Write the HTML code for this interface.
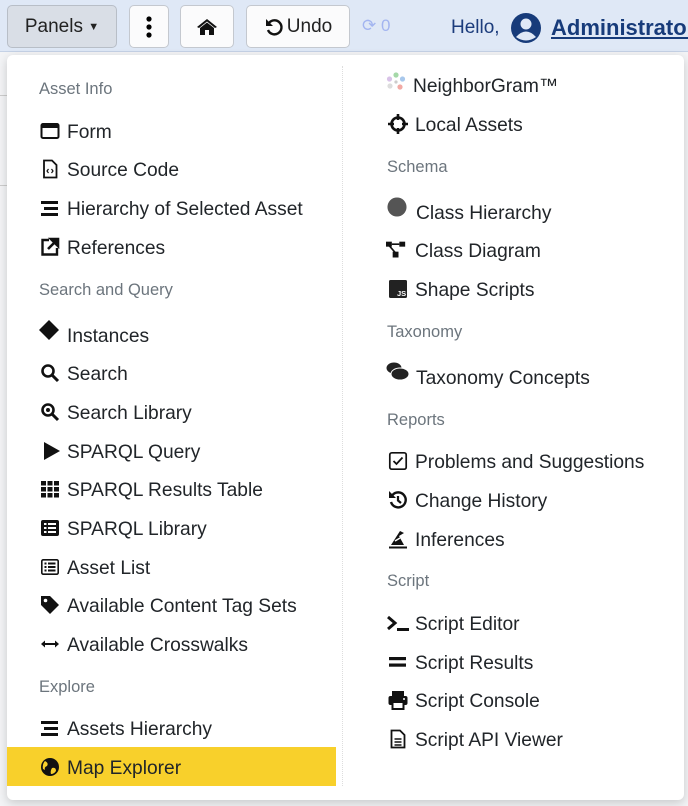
<!DOCTYPE html>
<html><head><meta charset="utf-8"><style>
*{box-sizing:border-box;margin:0;padding:0}
body{width:688px;height:806px;overflow:hidden;background:#f3f4f6;font-family:"Liberation Sans",sans-serif;position:relative;color:#212529}
.hdr{position:absolute;left:0;top:0;width:688px;height:52px;background:#dfe8f6;border-bottom:1px solid #c5d2e6}
.btn{position:absolute;top:5px;height:43px;border:1px solid #c4c8cf;border-radius:5px;background:#fbfbfc;font-size:19px;display:flex;align-items:center;justify-content:center;color:#222}
.menu{position:absolute;left:7px;top:55px;width:677px;height:745px;background:#fff;border-radius:6px;box-shadow:0 3px 10px rgba(0,0,0,.18)}
.div{position:absolute;left:342px;top:66px;height:720px;border-left:1px dotted #ddd}
.it{position:absolute;height:26px;line-height:26px;font-size:19.2px;color:#212529;white-space:nowrap;margin-top:2px}
.hd{position:absolute;height:22px;line-height:22px;font-size:16.5px;color:#6c757d}
.ic{position:absolute;width:20px;height:20px}
.sel{position:absolute;left:7px;top:747px;width:329px;height:39px;background:#f8d02b}
</style></head><body>
<div style="position:absolute;left:0;top:95px;width:7px;height:1px;background:#ccc"></div>
<div style="position:absolute;left:0;top:185px;width:7px;height:1px;background:#ccc"></div>
<div class="hdr"></div>
<div class="btn" style="left:7px;width:110px;background:#d9dee6;border-color:#b8bec7">Panels&nbsp;<span style="font-size:11px">▼</span></div>
<div class="btn" style="left:129px;width:40px"><svg width="6" height="22"><circle cx="3" cy="3" r="2.6"/><circle cx="3" cy="11" r="2.6"/><circle cx="3" cy="19" r="2.6"/></svg></div>
<div class="btn" style="left:180px;width:54px"><svg width="22" height="18" viewBox="0 0 22 18"><path d="M11 1 L1 9 L3 10 L11 3.5 L19 10 L21 9 Z M4 10 L4 17 L9 17 L9 12 L13 12 L13 17 L18 17 L18 10 L11 4.5 Z" fill="#111"/></svg></div>
<div class="btn" style="left:246px;width:104px"><svg width="20" height="20" viewBox="0 0 20 20" style="margin-right:3px"><path d="M5 6 A7 7 0 1 1 4 13" fill="none" stroke="#111" stroke-width="2.4"/><path d="M2 2 L2 9 L9 9 Z" fill="#111"/></svg>Undo</div>
<div style="position:absolute;left:362px;top:16px;font-size:17px;color:#a3b5f0">⟳ 0</div>
<div style="position:absolute;left:451px;top:17px;font-size:19px;color:#1c3c7c">Hello,</div>
<svg style="position:absolute;left:510px;top:12px" width="32" height="32" viewBox="0 0 32 32"><circle cx="16" cy="16" r="15" fill="#173b7a"/><circle cx="16" cy="12" r="5.5" fill="#dfe8f6"/><path d="M6 25 Q16 14 26 25 Q16 32 6 25Z" fill="#dfe8f6"/></svg>
<div style="position:absolute;left:551px;top:15px;font-size:22px;font-weight:bold;color:#173b7a;text-decoration:underline;white-space:nowrap">Administrator</div>
<div class="menu"></div>
<div class="div"></div>
<div class="sel"></div>

<div class="hd" style="left:39px;top:78px">Asset Info</div>
<svg class="ic" style="left:40px;top:121px" viewBox="0 0 20 20"><rect x="1.5" y="3" width="17" height="14" rx="1.5" fill="none" stroke="#111" stroke-width="2"/><rect x="1.5" y="3" width="17" height="4" fill="#111"/></svg><div class="it" style="left:67px;top:118px">Form</div>
<svg class="ic" style="left:40px;top:159px" viewBox="0 0 20 20"><path d="M4 1.5 H12 L16.5 6 V18.5 H4 Z" fill="none" stroke="#111" stroke-width="1.8"/><path d="M8.5 10 L7 12 L8.5 14 M11.5 10 L13 12 L11.5 14" fill="none" stroke="#111" stroke-width="1.2"/></svg><div class="it" style="left:67px;top:156px">Source Code</div>
<svg class="ic" style="left:40px;top:198px" viewBox="0 0 20 20"><rect x="1" y="3" width="17" height="3" fill="#111"/><rect x="4" y="9" width="14" height="3" fill="#111"/><rect x="1" y="15" width="17" height="3" fill="#111"/></svg><div class="it" style="left:67px;top:195px">Hierarchy of Selected Asset</div>
<svg class="ic" style="left:40px;top:237px" viewBox="0 0 20 20"><path d="M9 3 H2.5 V17.5 H17 V11" fill="none" stroke="#111" stroke-width="2.4"/><path d="M11 2 H18 V9 Z M16 4 L8 12" stroke="#111" stroke-width="2.6" fill="#111"/></svg><div class="it" style="left:67px;top:234px">References</div>
<div class="hd" style="left:39px;top:279px">Search and Query</div>
<svg class="ic" style="left:39px;top:320px" viewBox="0 0 22 22"><path d="M11 0 L22 11 L11 22 L0 11Z" fill="#111"/></svg><div class="it" style="left:67px;top:322px">Instances</div>
<svg class="ic" style="left:40px;top:363px" viewBox="0 0 20 20"><circle cx="8" cy="8" r="5.5" fill="none" stroke="#111" stroke-width="2.6"/><path d="M12 12 L18 18" stroke="#111" stroke-width="3"/></svg><div class="it" style="left:67px;top:360px">Search</div>
<svg class="ic" style="left:40px;top:402px" viewBox="0 0 20 20"><circle cx="8" cy="8" r="5.5" fill="none" stroke="#111" stroke-width="2.6"/><circle cx="8" cy="8" r="2" fill="#111"/><path d="M12 12 L18 18" stroke="#111" stroke-width="3"/></svg><div class="it" style="left:67px;top:399px">Search Library</div>
<svg class="ic" style="left:42px;top:441px" viewBox="0 0 20 20"><path d="M2 1 L18 10 L2 19Z" fill="#111"/></svg><div class="it" style="left:67px;top:438px">SPARQL Query</div>
<svg class="ic" style="left:40px;top:479px" viewBox="0 0 20 20"><g fill="#111"><rect x="1" y="2" width="5" height="4.5"/><rect x="7.5" y="2" width="5" height="4.5"/><rect x="14" y="2" width="5" height="4.5"/><rect x="1" y="8" width="5" height="4.5"/><rect x="7.5" y="8" width="5" height="4.5"/><rect x="14" y="8" width="5" height="4.5"/><rect x="1" y="14" width="5" height="4.5"/><rect x="7.5" y="14" width="5" height="4.5"/><rect x="14" y="14" width="5" height="4.5"/></g></svg><div class="it" style="left:67px;top:476px">SPARQL Results Table</div>
<svg class="ic" style="left:40px;top:518px" viewBox="0 0 20 20"><rect x="1" y="2" width="18" height="16" rx="2" fill="#111"/><g fill="#fff"><rect x="4" y="5" width="2.5" height="2"/><rect x="8" y="5" width="8" height="2"/><rect x="4" y="9" width="2.5" height="2"/><rect x="8" y="9" width="8" height="2"/><rect x="4" y="13" width="2.5" height="2"/><rect x="8" y="13" width="8" height="2"/></g></svg><div class="it" style="left:67px;top:515px">SPARQL Library</div>
<svg class="ic" style="left:40px;top:557px" viewBox="0 0 20 20"><rect x="1.8" y="2.8" width="16.4" height="14.4" rx="1.5" fill="none" stroke="#111" stroke-width="1.6"/><g fill="#111"><rect x="4.5" y="5.5" width="2" height="2"/><rect x="8" y="5.5" width="7.5" height="2"/><rect x="4.5" y="9" width="2" height="2"/><rect x="8" y="9" width="7.5" height="2"/><rect x="4.5" y="12.5" width="2" height="2"/><rect x="8" y="12.5" width="7.5" height="2"/></g></svg><div class="it" style="left:67px;top:554px">Asset List</div>
<svg class="ic" style="left:40px;top:595px" viewBox="0 0 20 20"><path d="M1 1 H10 L19 10 L10 19 L1 10Z" fill="#111"/><circle cx="5.5" cy="5.5" r="1.8" fill="#fff"/></svg><div class="it" style="left:67px;top:592px">Available Content Tag Sets</div>
<svg class="ic" style="left:40px;top:634px" viewBox="0 0 20 20"><path d="M4 10 H16" stroke="#111" stroke-width="2"/><path d="M1 10 L5 6.5 V13.5Z M19 10 L15 6.5 V13.5Z" fill="#111"/></svg><div class="it" style="left:67px;top:631px">Available Crosswalks</div>
<div class="hd" style="left:39px;top:676px">Explore</div>
<svg class="ic" style="left:40px;top:718px" viewBox="0 0 20 20"><rect x="1" y="3" width="17" height="3" fill="#111"/><rect x="4" y="9" width="14" height="3" fill="#111"/><rect x="1" y="15" width="17" height="3" fill="#111"/></svg><div class="it" style="left:67px;top:715px">Assets Hierarchy</div>
<svg class="ic" style="left:40px;top:757px" viewBox="0 0 20 20"><circle cx="10" cy="10" r="9" fill="#111"/><path d="M5 4 Q9 6 7 9 Q4 10 5 13 L3 12 Q2 7 5 4Z M12 11 Q16 10 16 14 Q14 17 11 17 Q10 14 12 11Z" fill="#f8d02b"/></svg><div class="it" style="left:67px;top:754px">Map Explorer</div>

<svg class="ic" style="left:386px;top:72px" viewBox="0 0 20 20"><circle cx="10" cy="3" r="2.6" fill="#a5d8a8"/><circle cx="3.5" cy="7" r="2.6" fill="#d9c3e8"/><circle cx="16.5" cy="7" r="2.6" fill="#a8c8ec"/><circle cx="4" cy="14" r="2.6" fill="#ddd"/><circle cx="14" cy="15" r="2.6" fill="#f2aaa5"/><circle cx="10" cy="10" r="1.6" fill="#ccc"/></svg><div class="it" style="left:413px;top:72px">NeighborGram™</div>
<svg class="ic" style="left:388px;top:114px" viewBox="0 0 20 20"><circle cx="10" cy="10" r="6.5" fill="none" stroke="#111" stroke-width="2.6"/><path d="M10 0 V6 M10 14 V20 M0 10 H6 M14 10 H20" stroke="#111" stroke-width="2.6"/></svg><div class="it" style="left:415px;top:111px">Local Assets</div>
<div class="hd" style="left:387px;top:156px">Schema</div>
<svg class="ic" style="left:387px;top:197px" viewBox="0 0 22 22"><circle cx="11" cy="11" r="10.5" fill="#555"/></svg><div class="it" style="left:416px;top:199px">Class Hierarchy</div>
<svg class="ic" style="left:386px;top:240px" viewBox="0 0 24 20"><g fill="#111"><rect x="0" y="0" width="7" height="6"/><rect x="16" y="0" width="7" height="6"/><rect x="8" y="12" width="7" height="7"/></g><path d="M7 3 H16 M4 5 L11 13" stroke="#111" stroke-width="2"/></svg><div class="it" style="left:415px;top:237px">Class Diagram</div>
<svg class="ic" style="left:388px;top:279px" viewBox="0 0 20 20"><rect x="1" y="1" width="18" height="18" rx="1.5" fill="#222"/><text x="9" y="17" font-size="7.5" font-weight="bold" fill="#fff" font-family="Liberation Sans">JS</text></svg><div class="it" style="left:415px;top:276px">Shape Scripts</div>
<div class="hd" style="left:387px;top:321px">Taxonomy</div>
<svg class="ic" style="left:386px;top:362px;width:24px" viewBox="0 0 24 20"><ellipse cx="8" cy="6" rx="7.5" ry="5.5" fill="#222"/><ellipse cx="14" cy="12" rx="9" ry="6" fill="#222" stroke="#fff" stroke-width="1"/></svg><div class="it" style="left:416px;top:364px">Taxonomy Concepts</div>
<div class="hd" style="left:387px;top:409px">Reports</div>
<svg class="ic" style="left:388px;top:451px" viewBox="0 0 20 20"><rect x="1.8" y="1.8" width="16.4" height="16.4" rx="2" fill="none" stroke="#111" stroke-width="1.7"/><path d="M5.5 10 L8.5 13 L14.5 6.5" fill="none" stroke="#111" stroke-width="1.8"/></svg><div class="it" style="left:415px;top:448px">Problems and Suggestions</div>
<svg class="ic" style="left:388px;top:490px" viewBox="0 0 20 20"><path d="M4.5 5 A7.5 7.5 0 1 1 3 12" fill="none" stroke="#111" stroke-width="2.4"/><path d="M1 1 V8 H8Z" fill="#111"/><path d="M10 6 V10.5 L13 13" fill="none" stroke="#111" stroke-width="2.2"/></svg><div class="it" style="left:415px;top:487px">Change History</div>
<svg class="ic" style="left:388px;top:529px" viewBox="0 0 20 20"><path d="M3 16 L12 2 L16 4 L11 7 L16 16Z" fill="#111"/><path d="M7 12 L12 9" stroke="#fff" stroke-width="1.5"/><rect x="1" y="17.5" width="18" height="2" fill="#111"/></svg><div class="it" style="left:415px;top:526px">Inferences</div>
<div class="hd" style="left:387px;top:570px">Script</div>
<svg class="ic" style="left:386px;top:613px;width:24px" viewBox="0 0 24 20"><path d="M2 4 L9 10 L2 16" fill="none" stroke="#111" stroke-width="3"/><rect x="11" y="15" width="12" height="3" fill="#111"/></svg><div class="it" style="left:415px;top:610px">Script Editor</div>
<svg class="ic" style="left:388px;top:652px" viewBox="0 0 20 20"><rect x="1" y="5" width="17" height="3.2" fill="#111"/><rect x="1" y="11.5" width="17" height="3.2" fill="#111"/></svg><div class="it" style="left:415px;top:649px">Script Results</div>
<svg class="ic" style="left:388px;top:690px" viewBox="0 0 20 20"><rect x="4" y="1" width="12" height="6" fill="#111"/><rect x="0.5" y="6" width="19" height="9" rx="2" fill="#111"/><rect x="4.5" y="12" width="11" height="7" fill="#fff" stroke="#111" stroke-width="2"/><circle cx="16" cy="9" r="1" fill="#fff"/></svg><div class="it" style="left:415px;top:687px">Script Console</div>
<svg class="ic" style="left:388px;top:729px" viewBox="0 0 20 20"><path d="M3.5 1.5 H12 L16.5 6 V18.5 H3.5 Z" fill="none" stroke="#111" stroke-width="1.8"/><path d="M6.5 10 H13.5 M6.5 13 H13.5 M6.5 16 H13.5" stroke="#111" stroke-width="1.4"/></svg><div class="it" style="left:415px;top:726px">Script API Viewer</div>
</body></html>
